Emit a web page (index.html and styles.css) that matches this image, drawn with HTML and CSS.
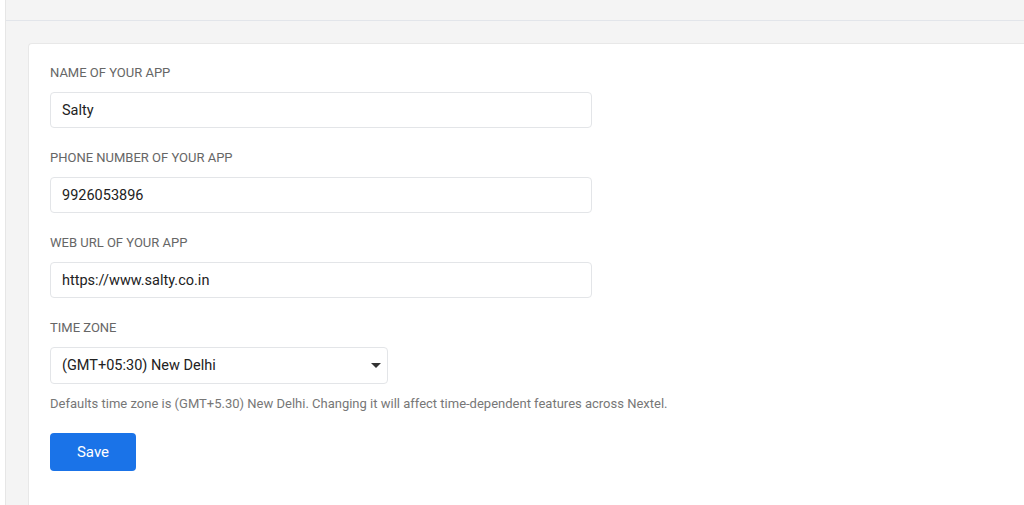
FILE: index.html
```html
<!DOCTYPE html>
<html lang="en">
<head>
    <meta charset="UTF-8">
    <title>App Settings</title>
    <link rel="stylesheet" href="styles.css">
</head>
<body>
<div class="page">
    <div class="top-bar"></div>

    <div class="content">
        <div class="card">

            <!-- app name -->
            <div class="field">
                <label class="field-label">NAME OF YOUR APP</label>
                <div class="input wide">Salty</div>
            </div>

            <!-- phone -->
            <div class="field">
                <label class="field-label">PHONE NUMBER OF YOUR APP</label>
                <div class="input wide">9926053896</div>
            </div>

            <!-- web url -->
            <div class="field">
                <label class="field-label">WEB URL OF YOUR APP</label>
                <div class="input wide">https://www.salty.co.in</div>
            </div>

            <!-- time zone -->
            <div class="field last">
                <label class="field-label">TIME ZONE</label>
                <div class="input select">
                    <span>(GMT+05:30) New Delhi</span>
                    <span class="caret"></span>
                </div>
                <p class="help">Defaults time zone is (GMT+5.30) New Delhi. Changing it will affect time-dependent features across Nextel.</p>
            </div>

            <button class="btn-save">Save</button>
        </div>
    </div>
</div>
</body>
</html>
```

FILE: styles.css
```css
* {
    box-sizing: border-box;
}

body {
    margin: 0;
    background-color: #fff;
    font-family: Roboto, "Liberation Sans", Arial, sans-serif;
}

.page {
    margin-left: 5px;
    height: 505px;
    background-color: #f4f4f4;
    border-left: 1px solid #e6e6e6;
    overflow: hidden;
}

.top-bar {
    height: 21px;
    border-bottom: 1px solid #e2e5ea;
}

.content {
    padding: 22px 0 0 22px;
}

.card {
    background-color: #fff;
    border: 1px solid #e8e8e8;
    border-right: none;
    border-radius: 4px 0 0 0;
    padding: 21px 21px 40px;
    height: 470px;
}

.field {
    margin-bottom: 22px;
}

.field.last {
    margin-bottom: 21px;
}

.field-label {
    display: block;
    font-size: 13px;
    line-height: 16px;
    color: #666;
    margin-bottom: 11px;
}

.input {
    height: 36px;
    border: 1px solid #e3e5e8;
    border-radius: 4px;
    padding: 0 11px;
    font-size: 14.5px;
    color: #222;
    display: flex;
    align-items: center;
}

.input.wide {
    width: 542px;
}

.input.select {
    width: 338px;
    height: 37px;
    justify-content: space-between;
    padding-right: 6px;
}

.caret {
    width: 0;
    height: 0;
    border-left: 5px solid transparent;
    border-right: 5px solid transparent;
    border-top: 5px solid #333;
}

.help {
    margin: 12px 0 0;
    font-size: 13px;
    line-height: 16px;
    color: #777;
}

.btn-save {
    width: 86px;
    height: 38px;
    border: none;
    border-radius: 4px;
    background-color: #1a73e8;
    color: #fff;
    font-family: Roboto, "Liberation Sans", Arial, sans-serif;
    font-size: 15px;
    font-weight: 400;
}
```
